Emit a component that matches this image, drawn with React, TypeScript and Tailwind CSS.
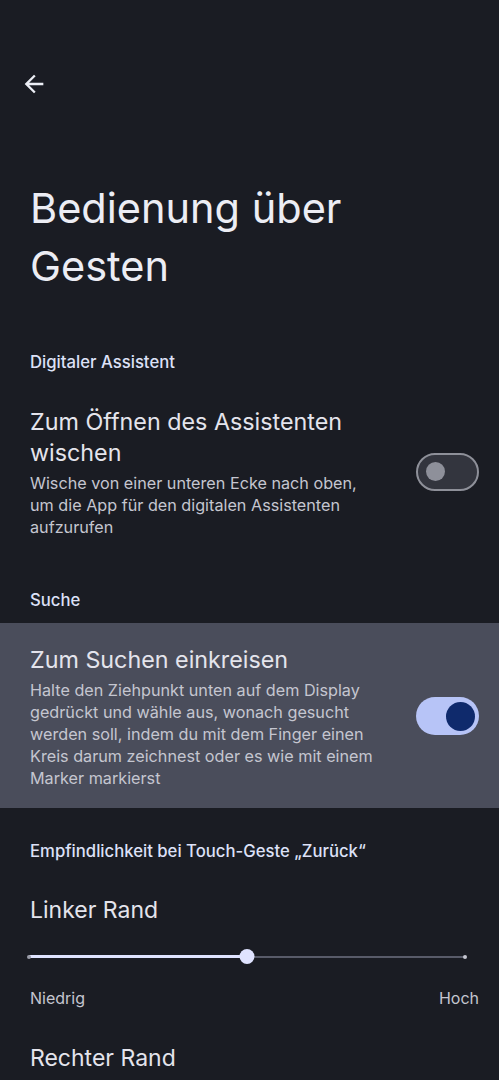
import React from "react";

const FONT = { fontFamily: "Inter, Roboto, 'Noto Sans', sans-serif" };

function Toggle({ on }: { on: boolean }) {
  if (on) {
    return (
      <div className="flex h-[38px] w-[63px] shrink-0 items-center justify-end rounded-full bg-[#b7c4f7] pr-[4px]">
        <div className="h-[29px] w-[29px] rounded-full bg-[#0f2a6c]" />
      </div>
    );
  }
  return (
    <div className="flex h-[38px] w-[63px] shrink-0 items-center rounded-full border-2 border-[#8e9099] bg-[#33353e] pl-[8px]">
      <div className="h-[19px] w-[19px] rounded-full bg-[#8e909a]" />
    </div>
  );
}

function SettingRow({
  title,
  desc,
  on,
}: {
  title: string[];
  desc: string[];
  on: boolean;
}) {
  return (
    <div className="flex items-center justify-between pl-[30px] pr-[20px]">
      <div className="flex flex-col">
        <div className="text-[23.3px] leading-[31px] text-[#e4e4ec]">
          {title.map((t) => (
            <div key={t}>{t}</div>
          ))}
        </div>
        <div className="mt-[3.5px] text-[16.2px] leading-[22px] text-[#c5c6d0]">
          {desc.map((d) => (
            <div key={d}>{d}</div>
          ))}
        </div>
      </div>
      <Toggle on={on} />
    </div>
  );
}

function Slider({ value }: { value: number }) {
  return (
    <div className="relative ml-[27px] mr-[32px] h-[20px]">
      <div className="absolute inset-y-0 left-[2px] right-[2px]">
        <div className="absolute left-0 right-0 top-[9px] h-[2px] bg-[#585b69]" />
        <div
          className="absolute left-0 top-[8.5px] h-[3px] bg-[#dfe3ff]"
          style={{ width: `${value}%` }}
        />
      </div>
      <div className="absolute left-0 top-[8px] h-[4px] w-[4px] rounded-full bg-[#9a9ca8]" />
      <div className="absolute right-0 top-[8px] h-[4px] w-[4px] rounded-full bg-[#c5c6d0]" />
      <div className="absolute inset-y-0 left-[2px] right-[2px]">
        <div
          className="absolute top-[2.5px] h-[15px] w-[15px] -translate-x-1/2 rounded-full bg-[#dfe3ff]"
          style={{ left: `${value}%` }}
        />
      </div>
    </div>
  );
}

export default function App() {
  return (
    <div className="min-h-[1080px] w-[499px] overflow-hidden bg-[#1a1c23]" style={FONT}>
      <div className="pt-[70px]">
        <div className="pl-[20px]">
          <svg width="28" height="28" viewBox="0 0 24 24" fill="#eceef5">
            <path d="M20 11H7.83l5.59-5.59L12 4l-8 8 8 8 1.41-1.41L7.83 13H20v-2z" />
          </svg>
        </div>

        <h1 className="mt-[81px] pl-[30px] text-[41.5px] leading-[58px] text-[#ecedf4]">
          Bedienung über
          <br />
          Gesten
        </h1>

        <div className="mt-[56px] pl-[30px] text-[16.7px] font-medium leading-[22px] text-[#dde1f7]">
          Digitaler Assistent
        </div>

        <div className="mt-[33px]">
          <SettingRow
            title={["Zum Öffnen des Assistenten", "wischen"]}
            desc={[
              "Wische von einer unteren Ecke nach oben,",
              "um die App für den digitalen Assistenten",
              "aufzurufen",
            ]}
            on={false}
          />
        </div>

        <div className="mt-[51px] pl-[30px] text-[16.7px] font-medium leading-[22px] text-[#dde1f7]">
          Suche
        </div>

        <div className="mt-[12px] bg-[#4a4d5b] pb-[19px] pt-[21.5px]">
          <SettingRow
            title={["Zum Suchen einkreisen"]}
            desc={[
              "Halte den Ziehpunkt unten auf dem Display",
              "gedrückt und wähle aus, wonach gesucht",
              "werden soll, indem du mit dem Finger einen",
              "Kreis darum zeichnest oder es wie mit einem",
              "Marker markierst",
            ]}
            on={true}
          />
        </div>

        <div className="mt-[32px] pl-[30px] text-[16.7px] font-medium leading-[22px] text-[#dde1f7]">
          Empfindlichkeit bei Touch-Geste „Zurück“
        </div>

        <div className="mt-[33px] pl-[30px] text-[23px] leading-[30px] text-[#e4e4ec]">
          Linker Rand
        </div>

        <div className="mt-[22px]">
          <Slider value={50} />
        </div>

        <div className="mt-[20px] flex justify-between pl-[30px] pr-[20px] text-[16px] leading-[22px] text-[#c5c6d0]">
          <span>Niedrig</span>
          <span>Hoch</span>
        </div>

        <div className="mt-[34px] pl-[30px] text-[23px] leading-[30px] text-[#e4e4ec]">
          Rechter Rand
        </div>
      </div>
    </div>
  );
}
